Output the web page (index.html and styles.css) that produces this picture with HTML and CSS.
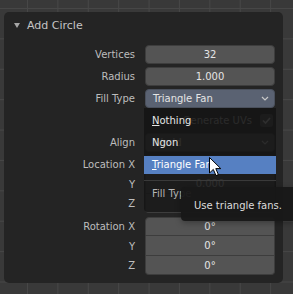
FILE: index.html
```html
<!DOCTYPE html>
<html lang="en">
<head>
    <meta charset="UTF-8">
    <title>Add Circle</title>
    <link rel="stylesheet" href="styles.css">
</head>
<body>
    <section class="panel">
        <header class="panel-head">
            <svg class="arrow" width="6" height="5" viewBox="0 0 6 5"><path d="M0 0H6L3 5Z" fill="#a6a6a6"/></svg>
            <span>Add Circle</span>
        </header>

        <div class="props">
            <div class="row">
                <span class="label">Vertices</span>
                <div class="field">32</div>
            </div>
            <div class="row">
                <span class="label">Radius</span>
                <div class="field">1.000</div>
            </div>
            <div class="row">
                <span class="label">Fill Type</span>
                <div class="field select open">
                    <span>Triangle Fan</span>
                    <svg width="8" height="5" viewBox="0 0 8 5"><path d="M1 1L4 4L7 1" fill="none" stroke="#c8c8c8" stroke-width="1.2"/></svg>
                </div>
            </div>
            <div class="row">
                <span class="label"></span>
                <div class="field plain">
                    <span>Generate UVs</span>
                    <span class="check">
                        <svg width="13" height="13" viewBox="0 0 13 13"><path d="M3 6.5L5.5 9L10 4" fill="none" stroke="#e6e6e6" stroke-width="1.6"/></svg>
                    </span>
                </div>
            </div>
            <div class="row">
                <span class="label">Align</span>
                <div class="field select">
                    <span>World</span>
                    <svg width="8" height="5" viewBox="0 0 8 5"><path d="M1 1L4 4L7 1" fill="none" stroke="#c8c8c8" stroke-width="1.2"/></svg>
                </div>
            </div>

            <div class="group loc">
                <div class="row">
                    <span class="label">Location X</span>
                    <div class="field">0.000</div>
                </div>
                <div class="row">
                    <span class="label">Y</span>
                    <div class="field">0.000</div>
                </div>
                <div class="row">
                    <span class="label">Z</span>
                    <div class="field">0.000</div>
                </div>
            </div>

            <div class="group">
                <div class="row">
                    <span class="label">Rotation X</span>
                    <div class="field">0°</div>
                </div>
                <div class="row">
                    <span class="label">Y</span>
                    <div class="field">0°</div>
                </div>
                <div class="row">
                    <span class="label">Z</span>
                    <div class="field">0°</div>
                </div>
            </div>
        </div>

        <!-- menu opened from Fill Type -->
        <div class="menu">
            <div class="item"><u>N</u>othing</div>
            <div class="item">Ngon</div>
            <div class="item active"><u>T</u>riangle Fan</div>
            <div class="sep"></div>
            <div class="menu-title">Fill Type</div>
        </div>

        <div class="tooltip">Use triangle fans.</div>

        <svg class="cursor" width="13" height="20" viewBox="0 0 13 20">
            <path d="M0.5 0.5V16L4.3 12.4L7 18.6L9.4 17.6L6.8 11.6H11.8Z" fill="#fff" stroke="#000" stroke-width="1"/>
        </svg>
    </section>
</body>
</html>
```

FILE: styles.css
```css
* {
    margin: 0;
    padding: 0;
    box-sizing: border-box;
}

body {
    width: 293px;
    height: 294px;
    overflow: hidden;
    padding: 12px 0 0 4px;
    background-color: #393939;
    background-image:
        linear-gradient(to right, #474747 1px, transparent 1px),
        linear-gradient(to bottom, #474747 1px, transparent 1px);
    background-size: 30.4px 30.4px;
    background-position: 27px 8px;
    font-family: "DejaVu Sans", sans-serif;
    font-size: 10px;
}

/* Painel */
.panel {
    position: relative;
    width: 279px;
    height: 271px;
    background: #242424;
    border-radius: 5px;
    padding: 0 8px 8px 0;
}

.panel-head {
    height: 26px;
    display: flex;
    align-items: center;
    gap: 7px;
    padding-left: 10px;
    color: #c5c5c5;
    font-size: 11px;
}

.props {
    display: flex;
    flex-direction: column;
    gap: 3px;
    padding-top: 7px;
}

.row {
    display: flex;
    align-items: center;
    height: 19px;
}

.label {
    width: 131px;
    text-align: right;
    color: #bdbdbd;
}

.field {
    width: 130px;
    height: 100%;
    margin-left: 10px;
    display: flex;
    align-items: center;
    justify-content: center;
    background: #545454;
    border: 1px solid #3d3d3d;
    border-radius: 4px;
    color: #e5e5e5;
}

.field.select {
    justify-content: space-between;
    padding: 0 5px 0 7px;
}

.field.open {
    background: #5a6272;
    border-color: #4a505c;
}

.field.plain {
    background: none;
    border: none;
    justify-content: flex-end;
    gap: 8px;
    padding-right: 2px;
    color: #c5c5c5;
}

.check {
    width: 13px;
    height: 13px;
    display: flex;
    background: #545454;
    border-radius: 3px;
}

/* Grupos alinhados */
.group .row:nth-child(2) {
    height: 20px;
}

.group .field {
    border-radius: 0;
    border-top-width: 0;
}

.group .row:first-child .field {
    border-top-width: 1px;
    border-radius: 4px 4px 0 0;
}

.group .row:last-child .field {
    border-radius: 0 0 4px 4px;
}

.group.loc {
    margin-bottom: 1px;
}

/* Menu */
.menu {
    position: absolute;
    left: 140px;
    top: 96px;
    width: 132px;
    height: 104px;
    display: flex;
    flex-direction: column;
    gap: 4px;
    padding-top: 4px;
    background: rgba(20, 20, 20, 0.88);
    border-radius: 0 0 4px 4px;
}

.item {
    height: 18px;
    line-height: 18px;
    padding-left: 8px;
    color: #e6e6e6;
}

.item.active {
    background: #5680c2;
    color: #fff;
}

.sep {
    height: 1px;
    margin-top: 2px;
    background: #3a3a3a;
}

.menu-title {
    height: 18px;
    line-height: 18px;
    padding-left: 8px;
    color: #b5b5b5;
}

/* Dica */
.tooltip {
    position: absolute;
    left: 177px;
    top: 175px;
    width: 116px;
    height: 34px;
    display: flex;
    align-items: center;
    padding: 2px 0 0 13px;
    background: rgba(24, 24, 24, 0.96);
    border-radius: 4px;
    color: #dcdcdc;
    box-shadow: 0 2px 6px rgba(0, 0, 0, 0.3);
}

.cursor {
    position: absolute;
    left: 205px;
    top: 145px;
}
```
